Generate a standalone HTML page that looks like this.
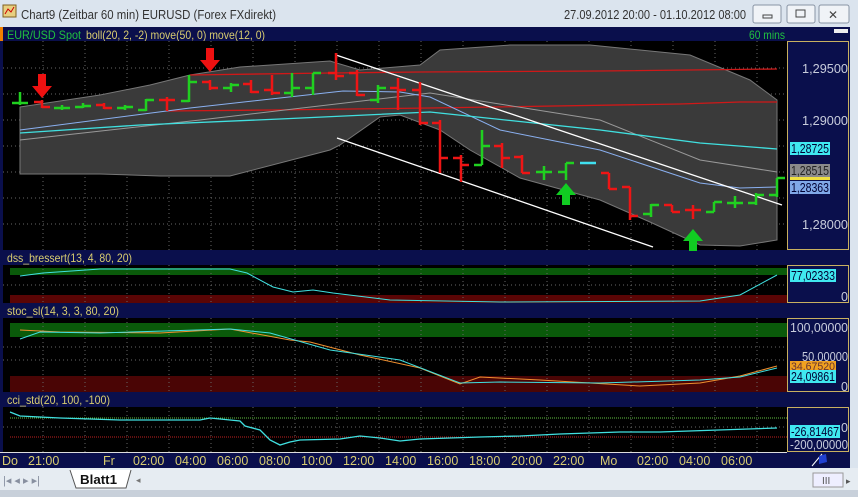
<!DOCTYPE html>
<html><head><meta charset="utf-8"><style>
body{margin:0;width:858px;height:497px;overflow:hidden;background:#dde5ee;font-family:"Liberation Sans",sans-serif;}
svg{position:absolute;left:0;top:0}
</style></head><body>
<svg id="s" width="858" height="497" xmlns="http://www.w3.org/2000/svg" font-family="Liberation Sans, sans-serif">
<rect x="0" y="0" width="858" height="27" fill="#dbe4ee"/>
<rect x="3" y="5" width="13" height="12" fill="#e8d080" stroke="#806020"/><path d="M5 14 L8 9 L11 12 L14 7" stroke="#c00" fill="none"/>
<text x="21" y="19" font-size="13" fill="#333" textLength="255" lengthAdjust="spacingAndGlyphs">Chart9 (Zeitbar 60 min)  EURUSD (Forex FXdirekt)</text>
<text x="564" y="19" font-size="12.5" fill="#333" textLength="182" lengthAdjust="spacingAndGlyphs">27.09.2012 20:00 - 01.10.2012 08:00</text>
<g fill="#f0f3f7" stroke="#8894a4"><rect x="753" y="5" width="28" height="18" rx="2"/><rect x="787" y="5" width="28" height="18" rx="2"/><rect x="819" y="5" width="30" height="18" rx="2"/></g>
<rect x="763" y="15" width="9" height="3" fill="none" stroke="#444"/><rect x="796" y="10" width="9" height="7" fill="none" stroke="#444"/>
<text x="828" y="19" font-size="12" fill="#444">✕</text>
<rect x="0" y="27" width="850" height="441" fill="#0a0f4c"/>
<rect x="850" y="27" width="8" height="441" fill="#dbe4ee"/>
<rect x="0" y="27" width="3" height="14" fill="#f08000"/>
<text x="7" y="39" font-size="12" fill="#20c040" textLength="74" lengthAdjust="spacingAndGlyphs">EUR/USD Spot</text>
<text x="86" y="39" font-size="12" fill="#d8cc70" textLength="179" lengthAdjust="spacingAndGlyphs">boll(20, 2, -2) move(50, 0) move(12, 0)</text>
<text x="749" y="39" font-size="12" fill="#20c040" textLength="36" lengthAdjust="spacingAndGlyphs">60 mins</text>
<rect x="834" y="29" width="14" height="4" fill="#eee"/>
<rect x="3" y="41" width="784" height="209" fill="#000"/>
<rect x="3" y="265" width="784" height="38" fill="#000"/>
<rect x="3" y="318" width="784" height="74" fill="#000"/>
<rect x="3" y="407" width="784" height="45" fill="#000"/>
<text x="7" y="262" font-size="12" fill="#d8cc70" textLength="125" lengthAdjust="spacingAndGlyphs">dss_bressert(13, 4, 80, 20)</text>
<text x="7" y="315" font-size="12" fill="#d8cc70" textLength="112" lengthAdjust="spacingAndGlyphs">stoc_sl(14, 3, 3, 80, 20)</text>
<text x="7" y="404" font-size="12" fill="#d8cc70" textLength="103" lengthAdjust="spacingAndGlyphs">cci_std(20, 100, -100)</text>
<rect x="10" y="268" width="777" height="7" fill="#0a5a0a"/>
<rect x="10" y="295" width="777" height="8" fill="#5a0505"/>
<rect x="10" y="323" width="777" height="14" fill="#0a5a0a"/>
<rect x="10" y="376" width="777" height="16" fill="#4a0505"/>
<g id="grid" stroke="#666" stroke-dasharray="1,3" stroke-width="1"></g>
<path d="M20 107 L100 95 L150 85 L190 75 L240 67 L330 61 L360 70 L420 65 L440 50 L510 45 L590 45 L690 55 L750 80 L777 100 L777 240 L740 246 L700 245 L650 222 L600 200 L520 178 L470 150 L440 130 L400 115 L380 117 L340 145 L330 150 L230 176 L160 176 L100 174 L20 174 Z" fill="#3a3a3a" stroke="#777" stroke-width="1"/>
<polyline points="190,75 330,73 420,72 600,71 777,69" fill="none" stroke="#d01818" stroke-width="1.3"/>
<polyline points="167,111 273,110 430,108 680,104 740,102 777,102" fill="none" stroke="#d01818" stroke-width="1.3"/>
<polyline points="20,140 200,120 430,93 600,120 700,160 777,172" fill="none" stroke="#999" stroke-width="1"/>
<polyline points="20,130 190,108 343,91 400,92 430,97 500,130 600,150 700,183 740,188 777,187" fill="none" stroke="#8ab0f0" stroke-width="1"/>
<polyline points="20,133 140,125 280,119 430,112 600,130 700,143 777,149" fill="none" stroke="#40e0e0" stroke-width="1.3"/>
<line x1="336" y1="55" x2="782" y2="205" stroke="#fff" stroke-width="1.3"/>
<line x1="337" y1="138" x2="653" y2="247" stroke="#fff" stroke-width="1.3"/>
<g id="c" stroke-width="2.5" fill="none"></g>
<g fill="#ee1111"><path d="M38 74h8v12h6l-10 12l-10-12h6z"/><path d="M206 48h8v12h6l-10 12l-10-12h6z"/></g>
<g fill="#11cc22"><path d="M562 205h8v-10h6l-10-12l-10 12h6z"/><path d="M689 251h8v-10h6l-10-12l-10 12h6z"/></g>
<g fill="none" stroke="#c8b060"><rect x="787.5" y="41.5" width="61" height="208"/><rect x="787.5" y="265.5" width="61" height="37"/><rect x="787.5" y="318.5" width="61" height="73"/><rect x="787.5" y="407.5" width="61" height="44"/></g>
<g font-size="12.5" fill="#c8ccdc" text-anchor="end" lengthAdjust="spacingAndGlyphs">
<text x="848" y="73" textLength="46" lengthAdjust="spacingAndGlyphs">1,29500</text><text x="848" y="125" textLength="46" lengthAdjust="spacingAndGlyphs">1,29000</text><text x="848" y="229" textLength="46" lengthAdjust="spacingAndGlyphs">1,28000</text>
<text x="848" y="301">0</text><text x="848" y="332" textLength="58" lengthAdjust="spacingAndGlyphs">100,00000</text><text x="848" y="361" textLength="46" lengthAdjust="spacingAndGlyphs">50,00000</text><text x="848" y="391">0</text>
<text x="848" y="432">0</text><text x="848" y="449" textLength="58" lengthAdjust="spacingAndGlyphs">-200,00000</text>
</g>
<rect x="790" y="142" width="40" height="13" fill="#40e8f0"/><text x="791" y="153" font-size="12.5" fill="#003" textLength="38" lengthAdjust="spacingAndGlyphs">1,28725</text>
<rect x="790" y="164" width="40" height="13" fill="#8a8a8a"/><text x="791" y="175" font-size="12.5" fill="#222" textLength="38" lengthAdjust="spacingAndGlyphs">1,28515</text>
<rect x="790" y="177" width="40" height="3" fill="#f0e040"/>
<rect x="790" y="181" width="40" height="13" fill="#80a8e8"/><text x="791" y="192" font-size="12.5" fill="#003" textLength="38" lengthAdjust="spacingAndGlyphs">1,28363</text>
<rect x="790" y="269" width="46" height="13" fill="#40e8f0"/><text x="791" y="280" font-size="12.5" fill="#003" textLength="44" lengthAdjust="spacingAndGlyphs">77,02333</text>
<rect x="790" y="361" width="46" height="10" fill="#f0a020"/><text x="791" y="370" font-size="11" fill="#633" textLength="44" lengthAdjust="spacingAndGlyphs">34,67520</text>
<rect x="790" y="370" width="46" height="13" fill="#40e8f0"/><text x="791" y="381" font-size="12.5" fill="#003" textLength="44" lengthAdjust="spacingAndGlyphs">24,09861</text>
<rect x="790" y="425" width="50" height="13" fill="#40e8f0"/><text x="791" y="436" font-size="12.5" fill="#003" textLength="48" lengthAdjust="spacingAndGlyphs">-26,81467</text>
<polyline points="20,276 43,273 100,269 230,269 247,273 273,287 293,292 313,290 333,293 390,300 500,302 700,301 740,295 777,275" fill="none" stroke="#40e0e0"/>
<polyline points="20,330 60,332 160,333 230,329 290,340 310,342 360,355 420,368 460,384 480,377 540,380 640,386 700,383 740,376 777,366" fill="none" stroke="#f09030"/>
<polyline points="20,339 40,332 100,333 230,329 270,333 330,350 400,360 460,383 500,382 600,383 700,380 740,377 777,368" fill="none" stroke="#40e0e0"/>
<line x1="10" y1="418" x2="787" y2="418" stroke="#60c040" stroke-dasharray="1,1"/>
<line x1="10" y1="437" x2="787" y2="437" stroke="#c02020" stroke-dasharray="1,1"/>
<polyline points="10,412 20,416 60,418 120,420 200,420 210,418 240,421 245,426 260,430 270,440 280,445 290,442 300,440 340,439 360,436 380,438 400,441 420,439 480,437 520,436 560,434 620,432 660,432 777,428" fill="none" stroke="#40e0e0" stroke-width="1.3"/>
<line x1="0" y1="452.5" x2="787" y2="452.5" stroke="#ddd"/>
<g font-size="12.5" fill="#d8cc70">
<text x="2" y="465">Do</text><text x="28" y="465">21:00</text><text x="103" y="465">Fr</text>
<text x="133" y="465">02:00</text><text x="175" y="465">04:00</text><text x="217" y="465">06:00</text><text x="259" y="465">08:00</text><text x="301" y="465">10:00</text><text x="343" y="465">12:00</text><text x="385" y="465">14:00</text><text x="427" y="465">16:00</text><text x="469" y="465">18:00</text><text x="511" y="465">20:00</text><text x="553" y="465">22:00</text><text x="600" y="465">Mo</text><text x="637" y="465">02:00</text><text x="679" y="465">04:00</text><text x="721" y="465">06:00</text>
</g>
<line x1="812" y1="466" x2="822" y2="454" stroke="#fff"/><path d="M819 456 L826 454 L827 462 L819 464 Z" fill="#2040d0"/>
<rect x="0" y="468" width="858" height="22" fill="#e6ecf2"/>
<rect x="0" y="490" width="858" height="7" fill="#c8d0da"/>
<g fill="#8890a0" font-size="11"><text x="3" y="484">|◂ ◂ ▸ ▸|</text></g>
<path d="M70 470 L76 488 L126 488 L131 470" fill="#fff" stroke="#555"/>
<text x="80" y="484" font-size="13" font-weight="bold" fill="#111" textLength="37" lengthAdjust="spacingAndGlyphs">Blatt1</text>
<text x="136" y="483" font-size="9" fill="#777">◂</text>
<rect x="813" y="473" width="30" height="14" fill="#eef" stroke="#999"/><text x="822" y="484" font-size="10" fill="#555">III</text>
<text x="846" y="484" font-size="9" fill="#555">▸</text>
</svg>
<script>
var ns="http://www.w3.org/2000/svg",g=document.getElementById('grid'),c=document.getElementById('c');
function L(p,x1,y1,x2,y2,col){var l=document.createElementNS(ns,'line');l.setAttribute('x1',x1);l.setAttribute('y1',y1);l.setAttribute('x2',x2);l.setAttribute('y2',y2);if(col)l.setAttribute('stroke',col);p.appendChild(l);}
[[41,250],[265,303],[318,392],[407,452]].forEach(function(r){for(var x=43;x<787;x+=42)L(g,x,r[0],x,r[1]);});
[68,94,120,146,172,198,224].forEach(function(y){L(g,3,y,787,y);});
[285,347,360,427].forEach(function(y){L(g,3,y,787,y);});
var b=[[20,'g',92,105,103,103],[42,'r',100,108,102,107],[62,'g',105,110,108,108],[83,'g',103,108,107,106],[104,'r',103,109,105,108],[125,'g',105,110,108,107],[146,'g',99,111,110,100],[167,'r',97,111,100,100],[189,'g',75,102,101,82],[210,'r',80,90,82,88],[231,'g',83,92,88,85],[251,'r',80,93,84,92],[272,'r',75,95,90,93],[292,'g',73,97,93,88],[313,'g',73,95,88,73],[336,'r',53,80,73,76],[357,'r',70,96,73,95],[378,'g',85,103,100,88],[398,'r',78,110,88,90],
[420,'r',82,125,90,123],[440,'r',120,173,123,158],[461,'r',155,182,158,165],[482,'g',130,165,165,146],[502,'r',143,168,146,158],[522,'r',155,173,157,173],[544,'g',166,180,172,172],[566,'g',163,180,172,163],[588,'c',163,163,163,163],[609,'r',173,189,173,189],[630,'r',187,220,187,216],[651,'g',204,217,214,205],[672,'r',205,212,205,212],[693,'r',205,219,210,210],[714,'g',202,212,212,202],[735,'g',196,208,203,203],[756,'g',193,205,203,195],[777,'g',178,197,195,178]];
b.forEach(function(d){var col=d[1]=='g'?'#20d020':d[1]=='r'?'#ee1515':'#40e0f0';var x=d[0];if(d[2]!=d[3])L(c,x,d[2],x,d[3],col);L(c,x-8,d[4],x,d[4],col);L(c,x,d[5],x+8,d[5],col);});
</script>
</body></html>
